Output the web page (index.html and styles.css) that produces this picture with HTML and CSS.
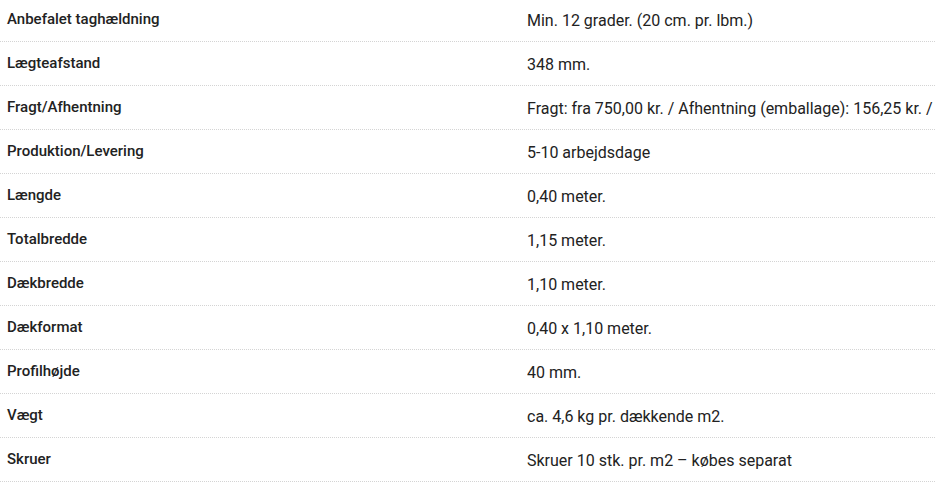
FILE: index.html
```html
<!DOCTYPE html>
<html lang="da">
<head>
<meta charset="utf-8">
<title>Specifikationer</title>
<link rel="stylesheet" href="styles.css">
</head>
<body>
<div class="specs">
  <div class="row"><div class="label">Anbefalet taghældning</div><div class="value">Min. 12 grader. (20 cm. pr. lbm.)</div></div>
  <div class="row"><div class="label">Lægteafstand</div><div class="value">348 mm.</div></div>
  <div class="row"><div class="label">Fragt/Afhentning</div><div class="value">Fragt: fra 750,00 kr. / Afhentning (emballage): 156,25 kr. /</div></div>
  <div class="row"><div class="label">Produktion/Levering</div><div class="value">5-10 arbejdsdage</div></div>
  <div class="row"><div class="label">Længde</div><div class="value">0,40 meter.</div></div>
  <div class="row"><div class="label">Totalbredde</div><div class="value">1,15 meter.</div></div>
  <div class="row"><div class="label">Dækbredde</div><div class="value">1,10 meter.</div></div>
  <div class="row"><div class="label">Dækformat</div><div class="value">0,40 x 1,10 meter.</div></div>
  <div class="row"><div class="label">Profilhøjde</div><div class="value">40 mm.</div></div>
  <div class="row"><div class="label">Vægt</div><div class="value">ca. 4,6 kg pr. dækkende m2.</div></div>
  <div class="row"><div class="label">Skruer</div><div class="value">Skruer 10 stk. pr. m2 – købes separat</div></div>
</div>
</body>
</html>
```
FILE: styles.css
```css
html, body {
  margin: 0;
  padding: 0;
  background: #ffffff;
  overflow: hidden;
}
body {
  font-family: Roboto, "Liberation Sans", sans-serif;
  color: #222222;
}
.specs {
  margin-top: -2px;
  width: 935px;
}
.row {
  display: flex;
  height: 43px;
  border-bottom: 1px dotted #d4d4d4;
  white-space: nowrap;
}
.label {
  width: 527px;
  flex: none;
  padding: 13px 0 0 7px;
  box-sizing: border-box;
  font-size: 15px;
  font-weight: 500;
  line-height: 17px;
}
.value {
  flex: 1;
  padding: 14px 0 0 0;
  font-size: 16px;
  line-height: 17px;
  overflow: hidden;
}
```
